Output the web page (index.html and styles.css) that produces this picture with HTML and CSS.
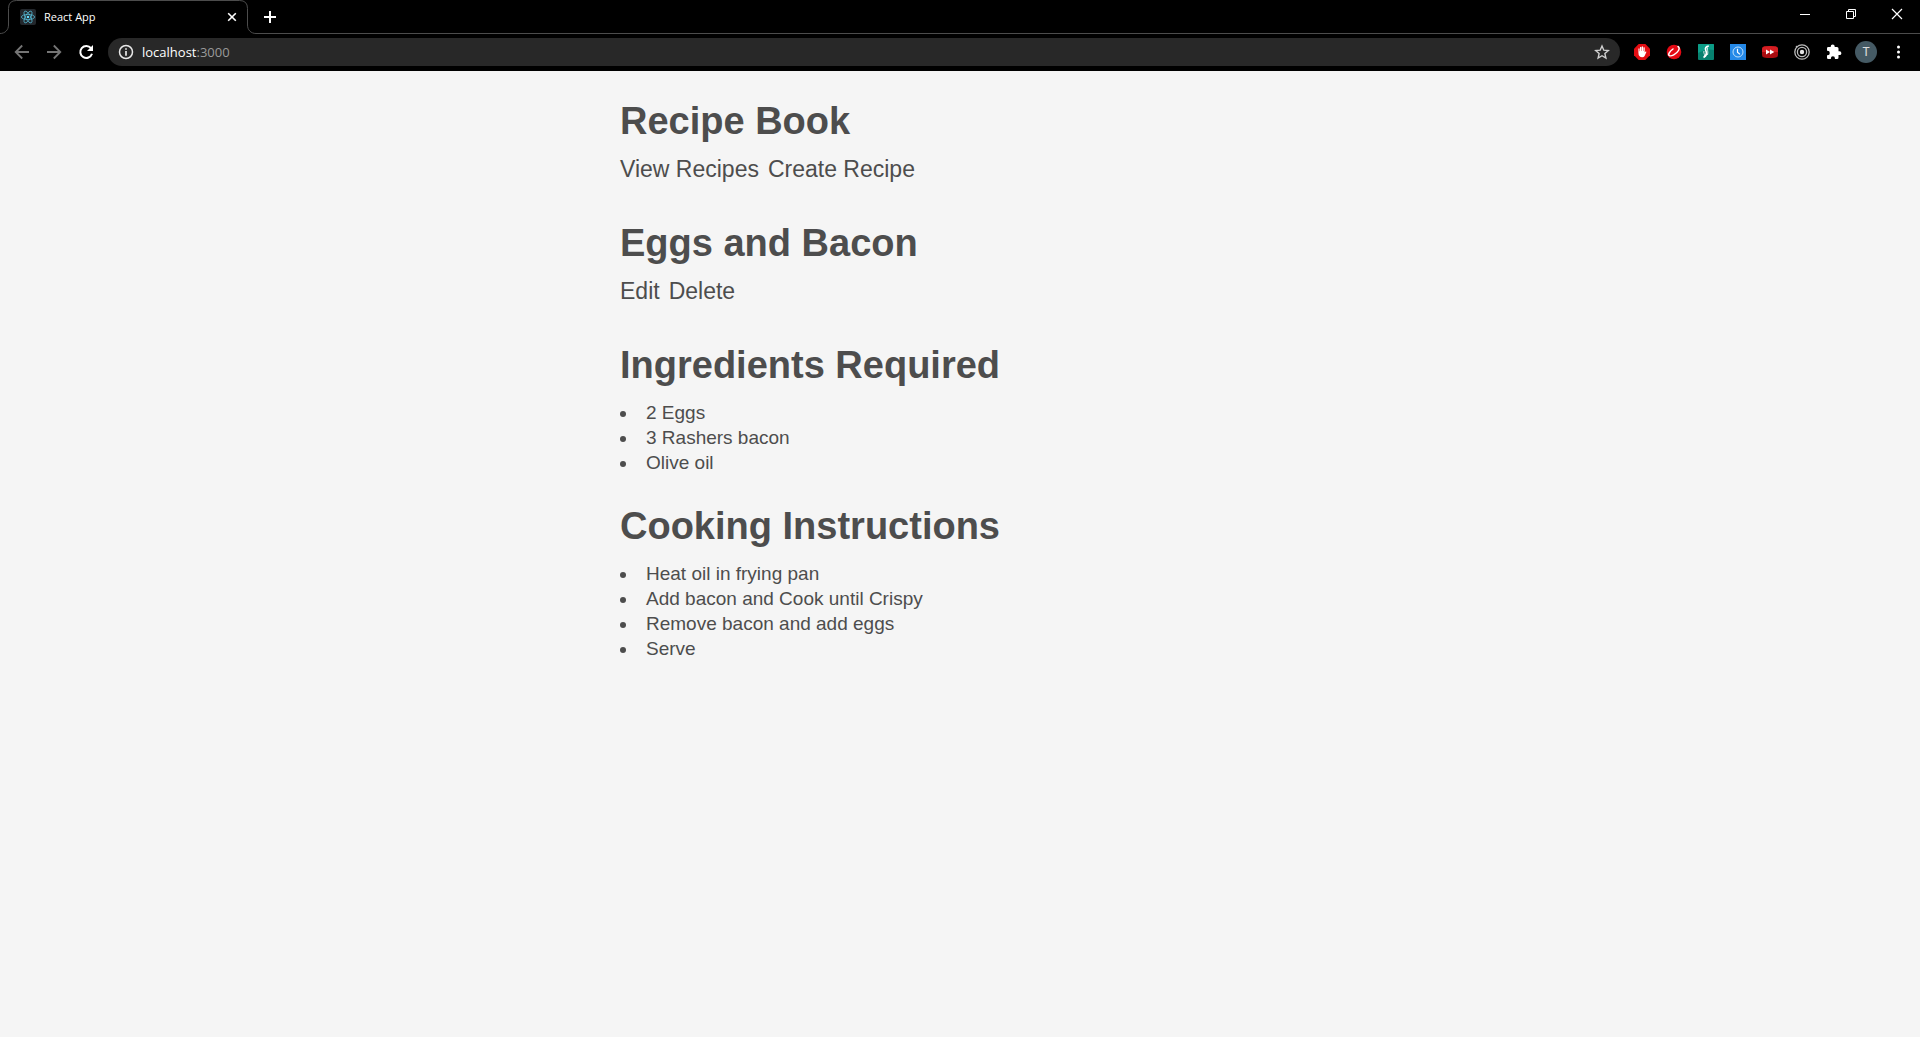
FILE: index.html
```html
<!DOCTYPE html>
<html lang="en">
<head>
<meta charset="utf-8">
<title>React App</title>
<link rel="stylesheet" href="styles.css">
</head>
<body>
<header class="browser">
  <div class="tab-strip">
    <div class="tab">
      <svg class="tab-outline" width="256" height="34" viewBox="0 0 256 34" fill="none" stroke="#4c4c4c"><path d="M0 33.5C5 33.5 8.500 30 8.500 25V8.500Q8.500.5 16.500.5H239.500Q247.500.5 247.500 8.500V25C247.500 30 251 33.500 256 33.500"/></svg>
      <svg class="icon" width="16" height="16" viewBox="0 0 16 16" fill="none" stroke="#53b5cf" stroke-width=".8"><rect width="16" height="16" rx="2" fill="#23272c" stroke="none"/><ellipse cx="8" cy="8" rx="6.600" ry="2.600"/><ellipse cx="8" cy="8" rx="6.600" ry="2.600" transform="rotate(60 8 8)"/><ellipse cx="8" cy="8" rx="6.600" ry="2.600" transform="rotate(120 8 8)"/><circle cx="8" cy="8" r="1.300" fill="#61dafb" stroke="none"/></svg>
      <span class="tab-title">React App</span>
      <button class="tab-close" aria-label="Close tab"><svg width="16" height="16" viewBox="0 0 16 16" stroke="#fff" stroke-width="1.600"><path d="M4.200 4.200l7.600 7.600M11.800 4.200l-7.600 7.600"/></svg></button>
    </div>
    <div class="strip-rest">
      <button class="new-tab" aria-label="New tab"><svg width="16" height="16" viewBox="0 0 16 16" stroke="#fff" stroke-width="2"><path d="M2 8H14M8 2V14"/></svg></button>
      <div class="window-controls">
        <button aria-label="Minimize"><svg width="12" height="12" viewBox="0 0 12 12" stroke="#fff"><path d="M1 6.500H11"/></svg></button>
        <button aria-label="Restore"><svg width="12" height="12" viewBox="0 0 12 12" fill="none" stroke="#fff"><path d="M1.500 3.500H8.500V10.500H1.500ZM3.500 3.500V1.500H10.500V8.500H8.500"/></svg></button>
        <button aria-label="Close"><svg width="12" height="12" viewBox="0 0 12 12" stroke="#fff" stroke-width="1.200"><path d="M1 1L11 11M11 1L1 11"/></svg></button>
      </div>
    </div>
  </div>
  <div class="toolbar">
    <div class="nav-buttons">
      <button aria-label="Back"><svg width="16" height="16" viewBox="0 0 16 16" fill="none" stroke="#757575" stroke-width="1.800"><path d="M15 8H2M8.200 1.500L1.700 8l6.500 6.500"/></svg></button>
      <button aria-label="Forward"><svg width="16" height="16" viewBox="0 0 16 16" fill="none" stroke="#757575" stroke-width="1.800"><path d="M1 8H14M7.800 1.500L14.300 8l-6.500 6.500"/></svg></button>
      <button aria-label="Reload"><svg width="16" height="16" viewBox="0 0 16 16" fill="none" stroke="#fff" stroke-width="2"><path d="M13 4.200A6 6 0 1 0 14 9.800"/><path d="M15 1V7H9Z" fill="#fff" stroke="none"/></svg></button>
    </div>
    <div class="address">
      <svg width="16" height="16" viewBox="0 0 16 16" fill="none" stroke="#e8e8e8" stroke-width="1.500"><circle cx="8" cy="8" r="6.500"/><path d="M8 7V11.700M8 4.200V5.800" stroke-width="1.700"/></svg>
      <span class="url">localhost<span class="port">:3000</span></span>
      <button aria-label="Bookmark this page"><svg width="16" height="16" viewBox="0 0 16 16" fill="none" stroke="#d0d0d0" stroke-width="1.400"><path d="M8 2L9.800 6.200L14.300 6.600L10.900 9.600L11.900 14L8 11.700L4.100 14L5.100 9.600L1.700 6.600L6.200 6.200Z"/></svg></button>
    </div>
    <div class="extensions">
      <button aria-label="Ad blocker"><svg width="16" height="16" viewBox="0 0 16 16"><path d="M4.700 0H11.300L16 4.700V11.300L11.300 16H4.700L0 11.300V4.700Z" fill="#e40d12"/><path d="M4.400 8.500V4.700Q5 4 5.600 4.700V7.200H6V3.200Q6.700 2.500 7.300 3.200V7H7.700V2.700Q8.400 2 9 2.700V7H9.400V3.500Q10.100 2.900 10.700 3.500V8.500L11.500 7.500Q12.500 7.200 12.400 8L10.600 12Q9.800 13.200 8.300 13.200Q4.400 13.200 4.400 8.500Z" fill="#fff"/></svg></button>
      <button aria-label="Web protection"><svg width="16" height="16" viewBox="0 0 16 16" fill="none" stroke="#fff" stroke-linecap="round"><circle cx="8" cy="8" r="7.300" fill="#e50914" stroke="none"/><path d="M7 5C3.500 7.500 1.800 10.500 3.200 11.500C5 12.800 10.500 10 12.500 6.500C13.500 4.700 13.300 3.200 12 2.500" stroke-width="1.500"/></svg></button>
      <button aria-label="Script tools"><svg width="16" height="16" viewBox="0 0 16 16"><rect width="16" height="16" rx="1" fill="#07816f"/><path d="M1 0H15Q16 0 16 1V6Q8 4 0 9V1Q0 0 1 0Z" fill="#0c9d87"/><path d="M10.800 2C8 2.300 6.800 4.300 7.800 6.500C9 9 8.800 11.500 5.500 13.500" fill="none" stroke="#fff" stroke-width="1.700"/><path d="M9.500 3.500C9 5.500 10.500 8 9.500 11M6 7C5.200 8.500 6.800 10 6.500 12" fill="none" stroke="#fff" stroke-width=".8"/></svg></button>
      <button aria-label="Time tracker"><svg width="16" height="16" viewBox="0 0 16 16" fill="none" stroke="#bfe0fb"><rect width="16" height="16" fill="#2589e8" stroke="none"/><circle cx="8" cy="8" r="5"/><path d="M7.500 4.800V8.200L10 10.400" stroke="#fff" stroke-width="1.200"/></svg></button>
      <button aria-label="Video speed"><svg width="16" height="16" viewBox="0 0 16 16"><path d="M2 2.500Q8 1.500 14 2.500Q16 3 16 5V11Q16 13 14 13.500Q8 14.500 2 13.500Q0 13 0 11V5Q0 3 2 2.500Z" fill="#a90c10"/><path d="M2 2.500Q8 1.500 14 2.500Q16 3 16 5V8H0V5Q0 3 2 2.500Z" fill="#d41e22"/><path d="M4 5.500L8 8L4 10.500ZM8 5.500L12.300 8L8 10.500Z" fill="#fff"/></svg></button>
      <button aria-label="Color picker"><svg width="16" height="16" viewBox="0 0 16 16" fill="none" stroke="#bcbcbc" stroke-width="1.300"><circle cx="8" cy="8" r="7.200"/><circle cx="8" cy="8" r="4.600"/><circle cx="8" cy="8" r="2.200" fill="#e5e5e5" stroke="none"/><circle cx="2.700" cy="2.700" r="1" fill="#bcbcbc" stroke="none"/></svg></button>
      <button aria-label="Extensions"><svg width="16" height="16" viewBox="0 0 16 16" fill="#fff"><path d="M13.500 7.300H12.500V4.500Q12.500 3 11 3H8.700V2.400A2 2 0 0 0 4.700 2.400V3H2.300Q1 3 1 4.400V6.800H1.600A2.200 2.200 0 0 1 1.600 11.200H1V13.700Q1 15 2.300 15H4.900V14.300A2 2 0 0 1 8.900 14.300V15H11Q12.500 15 12.500 13.500V11.100H13.500A1.900 1.900 0 0 0 13.500 7.300Z"/></svg></button>
    </div>
    <button class="avatar" aria-label="Profile">T</button>
    <button class="menu" aria-label="Menu"><svg width="16" height="16" viewBox="0 0 16 16" fill="#fff"><circle cx="8.500" cy="3" r="1.500"/><circle cx="8.500" cy="8" r="1.500"/><circle cx="8.500" cy="13" r="1.500"/></svg></button>
  </div>
</header>
<main class="page">
  <section>
    <h1>Recipe Book</h1>
    <nav class="links"><a href="#recipes">View Recipes</a><a href="#create">Create Recipe</a></nav>
  </section>
  <section>
    <h1>Eggs and Bacon</h1>
    <nav class="links"><a href="#edit">Edit</a><a href="#delete">Delete</a></nav>
  </section>
  <section>
    <h1>Ingredients Required</h1>
    <ul class="list">
      <li>2 Eggs</li>
      <li>3 Rashers bacon</li>
      <li>Olive oil</li>
    </ul>
  </section>
  <section>
    <h1>Cooking Instructions</h1>
    <ul class="list">
      <li>Heat oil in frying pan</li>
      <li>Add bacon and Cook until Crispy</li>
      <li>Remove bacon and add eggs</li>
      <li>Serve</li>
    </ul>
  </section>
</main>
</body>
</html>
```
FILE: styles.css
```css
* { box-sizing: border-box; }

body {
  margin: 0;
  background: #f5f5f5;
  color: #4d4d4d;
  font-family: "Liberation Sans", Arial, sans-serif;
}

svg { display: block; flex: none; }

button {
  display: flex;
  align-items: center;
  justify-content: center;
  padding: 0;
  border: 0;
  background: none;
  color: inherit;
  font: inherit;
}

/* Browser frame */
.browser {
  background: #000;
  color: #fff;
  font-family: "Open Sans", "Noto Sans", sans-serif;
}

.tab-strip { display: flex; height: 34px; }

.tab {
  position: relative;
  display: flex;
  align-items: center;
  width: 256px;
  padding: 0 16px 0 20px;
  gap: 8px;
}

.tab-outline { position: absolute; left: 0; top: 0; }

.tab-title { flex: 1; font-size: 11px; line-height: 16px; }

.strip-rest {
  flex: 1;
  display: flex;
  justify-content: space-between;
  border-bottom: 1px solid #4c4c4c;
}

.new-tab { width: 28px; }

.window-controls { display: flex; height: 28px; }
.window-controls button { width: 46px; }

.toolbar {
  display: flex;
  align-items: center;
  height: 37px;
  padding: 0 14px 1px;
}

.nav-buttons { display: flex; gap: 16px; }

.address {
  flex: 1;
  display: flex;
  align-items: center;
  gap: 8px;
  height: 28px;
  margin: 0 14px;
  padding: 0 10px;
  border-radius: 14px;
  background: #282828;
}

.url { flex: 1; font-size: 13px; line-height: 20px; }
.port { color: #9a9a9a; }

.extensions { display: flex; gap: 16px; }

.avatar {
  width: 22px;
  height: 22px;
  margin: 0 13px;
  border-radius: 50%;
  background: #455a64;
  color: #e0e0e0;
  font-family: Roboto, sans-serif;
  font-size: 12px;
}

/* Recipe page */
.page {
  display: flex;
  flex-direction: column;
  gap: 29px;
  max-width: 680px;
  margin: 0 auto;
  padding: 28px 0;
}

h1 {
  margin: 0 0 13px;
  font-size: 38px;
  line-height: 44px;
}

.links {
  display: flex;
  gap: 9px;
  padding-bottom: 10px;
  font-size: 23px;
  line-height: 26px;
}

.links a { color: inherit; text-decoration: none; }

.list {
  margin: 0;
  padding: 0;
  list-style-position: inside;
  font-size: 19px;
  line-height: 25px;
}
```
